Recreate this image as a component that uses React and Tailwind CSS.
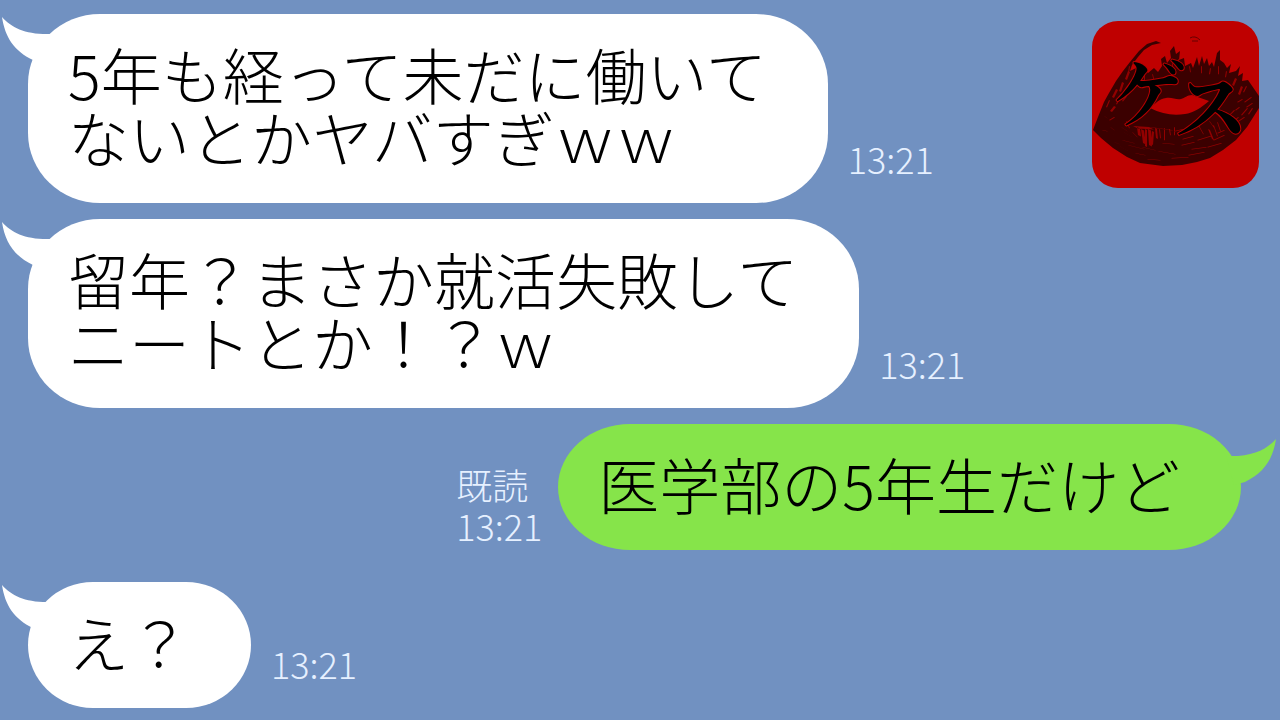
const CHAT_FONT = "font-['Noto_Sans_CJK_JP','Noto_Sans_CJK_SC',sans-serif] font-light";

function Tail({ side }) {
  const place =
    side === "left"
      ? "absolute -left-[26px] top-[3px] h-[46px] w-[52px] text-white"
      : "absolute -right-[35px] top-[15px] h-[46px] w-[52px] -scale-x-100 text-[#86e44a]";
  return (
    <svg aria-hidden="true" viewBox="0 0 52 46" className={place}>
      <path d="M0 0C10 11 24 18 50 17L42 46L31 43C12 34 3 20 0 0Z" fill="currentColor" />
    </svg>
  );
}

function Message({ lines, time, read, mine, spaced }) {
  const row = mine
    ? "flex flex-row-reverse items-end gap-4 pr-[39px]"
    : spaced
      ? "mt-4 flex items-end gap-5 pl-7"
      : "flex items-end gap-5 pl-7";
  return (
    <li className={row}>
      <div
        className={
          mine
            ? "relative rounded-[72px/63px] bg-[#86e44a] pt-7 pr-[61px] pb-[35px] pl-10"
            : "relative rounded-[72px/70px] bg-white pt-7 pr-[61px] pb-[35px] pl-10"
        }
      >
        <Tail side={mine ? "right" : "left"} />
        <p className="relative text-[61px] leading-[63px] whitespace-nowrap text-black">
          {lines.map((line) => (
            <span key={line} className="block">
              {line}
            </span>
          ))}
        </p>
      </div>
      <div className={mine ? "pb-1 text-4xl leading-[41px] text-[#e6f0ff]" : "pb-6 text-4xl leading-[41px] text-[#e6f0ff]"}>
        {read && <span className="block">{read}</span>}
        <time className="block">{time}</time>
      </div>
    </li>
  );
}

const LIPS =
  "M1 109L6 96L12 81L17 72L24 60L31 50L38 41L47 30L55 23L64 20L69 22L60 24L52 29L46 36L40 44L38 50L44 47L47 53L52 48L56 52L62 47L66 51L70 45L69 38L73 35L75 42L79 37L78 30L82 25L84 33L88 30L87 39L92 37L93 45L99 42L101 47L105 36L107 45L110 35L112 43L115 37L117 45L120 41L122 46L125 32L128 29L128 39L132 42L135 47L139 43L137 52L144 50L148 45L146 55L151 52L150 60L156 59L167 75L167 87L155 106L144 119L131 129L118 137L105 141L90 144L71 145L48 142L35 136L21 127L9 117Z";

/* Fine red streaks: [x, y, dx, dy, stroke width] */
const STREAKS = [
  [14, 86, 3, -7, 1], [18, 90, 4, -5, 2], [20, 76, 4, -8, 2], [24, 83, 3, -6, 1], [27, 70, 3, -9, 2],
  [33, 58, 3, -8, 2], [30, 80, 4, -5, 1], [17, 99, 5, -3, 1], [36, 52, 1, -7, 1], [12, 95, 3, 2, 1],
  [10, 109, 5, 1, 1], [18, 106, 4, 3, 1], [20, 113, 6, 3, 1], [29, 106, 6, 4, 1], [31, 111, 9, 5, 1],
  [30, 119, 12, 3, 1], [36, 124, 16, 4, 1], [50, 126, 13, 3, 1], [66, 130, 17, 3, 1], [34, 100, 3, 7, 1],
  [45, 106, 1, 8, 3], [49, 108, 2, 14, 3], [53, 108, 0, 17, 2], [56, 108, 1, 16, 3], [60, 110, -1, 13, 2],
  [63, 107, 1, 10, 2], [67, 108, 1, 9, 1], [72, 107, 0, 12, 1], [77, 108, 1, 6, 1], [82, 106, 0, 8, 1],
  [40, 111, 5, 5, 1], [41, 105, 16, 1, 5], [58, 106, 22, 3, 1], [82, 110, 9, -2, 1], [90, 118, 11, -3, 1],
  [89, 124, 13, -3, 1], [105, 119, 13, -4, 1], [99, 128, 15, -2, 1], [115, 126, 14, -4, 1], [79, 137, 17, -1, 1],
  [55, 138, 13, 1, 1], [96, 134, 16, -3, 1], [121, 119, 11, -5, 1], [111, 113, -5, -9, 1], [116, 108, 4, 10, 2],
  [121, 104, 4, 11, 1], [125, 101, 3, 9, 1], [117, 100, 5, 7, 1], [131, 96, 4, -4, 1], [137, 94, 5, -5, 1],
  [139, 102, 7, -6, 1], [143, 89, 4, -3, 1], [149, 94, 6, -7, 1], [146, 100, 6, -4, 1], [152, 81, 7, -5, 1],
  [154, 86, 6, -4, 1], [156, 93, 4, -6, 1], [145, 81, 5, -3, 1], [149, 65, -3, 8, 2], [143, 57, -3, 7, 2],
  [134, 50, -1, 6, 1], [154, 65, -3, 6, 1], [126, 45, 0, 8, 1], [118, 47, -1, 6, 1], [109, 45, 0, 7, 1],
  [97, 45, 1, 6, 1], [86, 38, 0, 9, 1], [80, 42, 0, 6, 1], [60, 53, 2, 8, 1], [52, 53, 0, 9, 1],
  [27, 125, 9, 5, 1], [43, 132, 10, 2, 1], [70, 122, 12, 1, 1], [125, 112, 7, -3, 1], [22, 121, 5, 2, 1],
];

const MINCHO = "font-['Noto_Serif_CJK_JP','Noto_Sans_CJK_JP',serif] text-[74px] font-bold";

function ChannelLogo() {
  return (
    <svg viewBox="0 0 167 167" className="absolute top-[21px] right-[21px] size-[167px] rounded-[26px] bg-[#bf0000]">
      <path d={LIPS} fill="#3b0000" />
      <path d="M98 17Q103 14 108 19M100 20L106 20" fill="none" stroke="#650000" strokeWidth="1" />
      <path
        d={STREAKS.map(([x, y, dx, dy, w]) => `M${x} ${y}l${dx} ${dy}l${w} ${w / 2}l${-dx} ${-dy}z`).join("")}
        fill="#b00000"
        opacity="0.75"
      />
      <path d="M58 87C64 82 67 78 74 77C80 76 84 79 89 78C93 77 95 74 100 74L117 80C109 87 101 92 93 93C81 95 70 93 58 87Z" fill="#bf0000" />
      <g className={MINCHO} fill="#000" stroke="#b80000" strokeWidth="2" strokeLinejoin="round" style={{ paintOrder: "stroke" }}>
        <text x="20" y="100">ゲ</text>
        <text x="82" y="113">ス</text>
      </g>
    </svg>
  );
}

export default function App() {
  return (
    <main className={`relative min-h-screen overflow-hidden bg-[#7191c1] pt-[14px] pb-3 ${CHAT_FONT}`}>
      <ul className="flex flex-col gap-4">
        <Message lines={["5年も経って未だに働いて", "ないとかヤバすぎｗｗ"]} time="13:21" />
        <Message lines={["留年？まさか就活失敗して", "ニートとか！？ｗ"]} time="13:21" />
        <Message lines={["医学部の5年生だけど"]} time="13:21" read="既読" mine />
        <Message lines={["え？"]} time="13:21" spaced />
      </ul>
      <ChannelLogo />
    </main>
  );
}
